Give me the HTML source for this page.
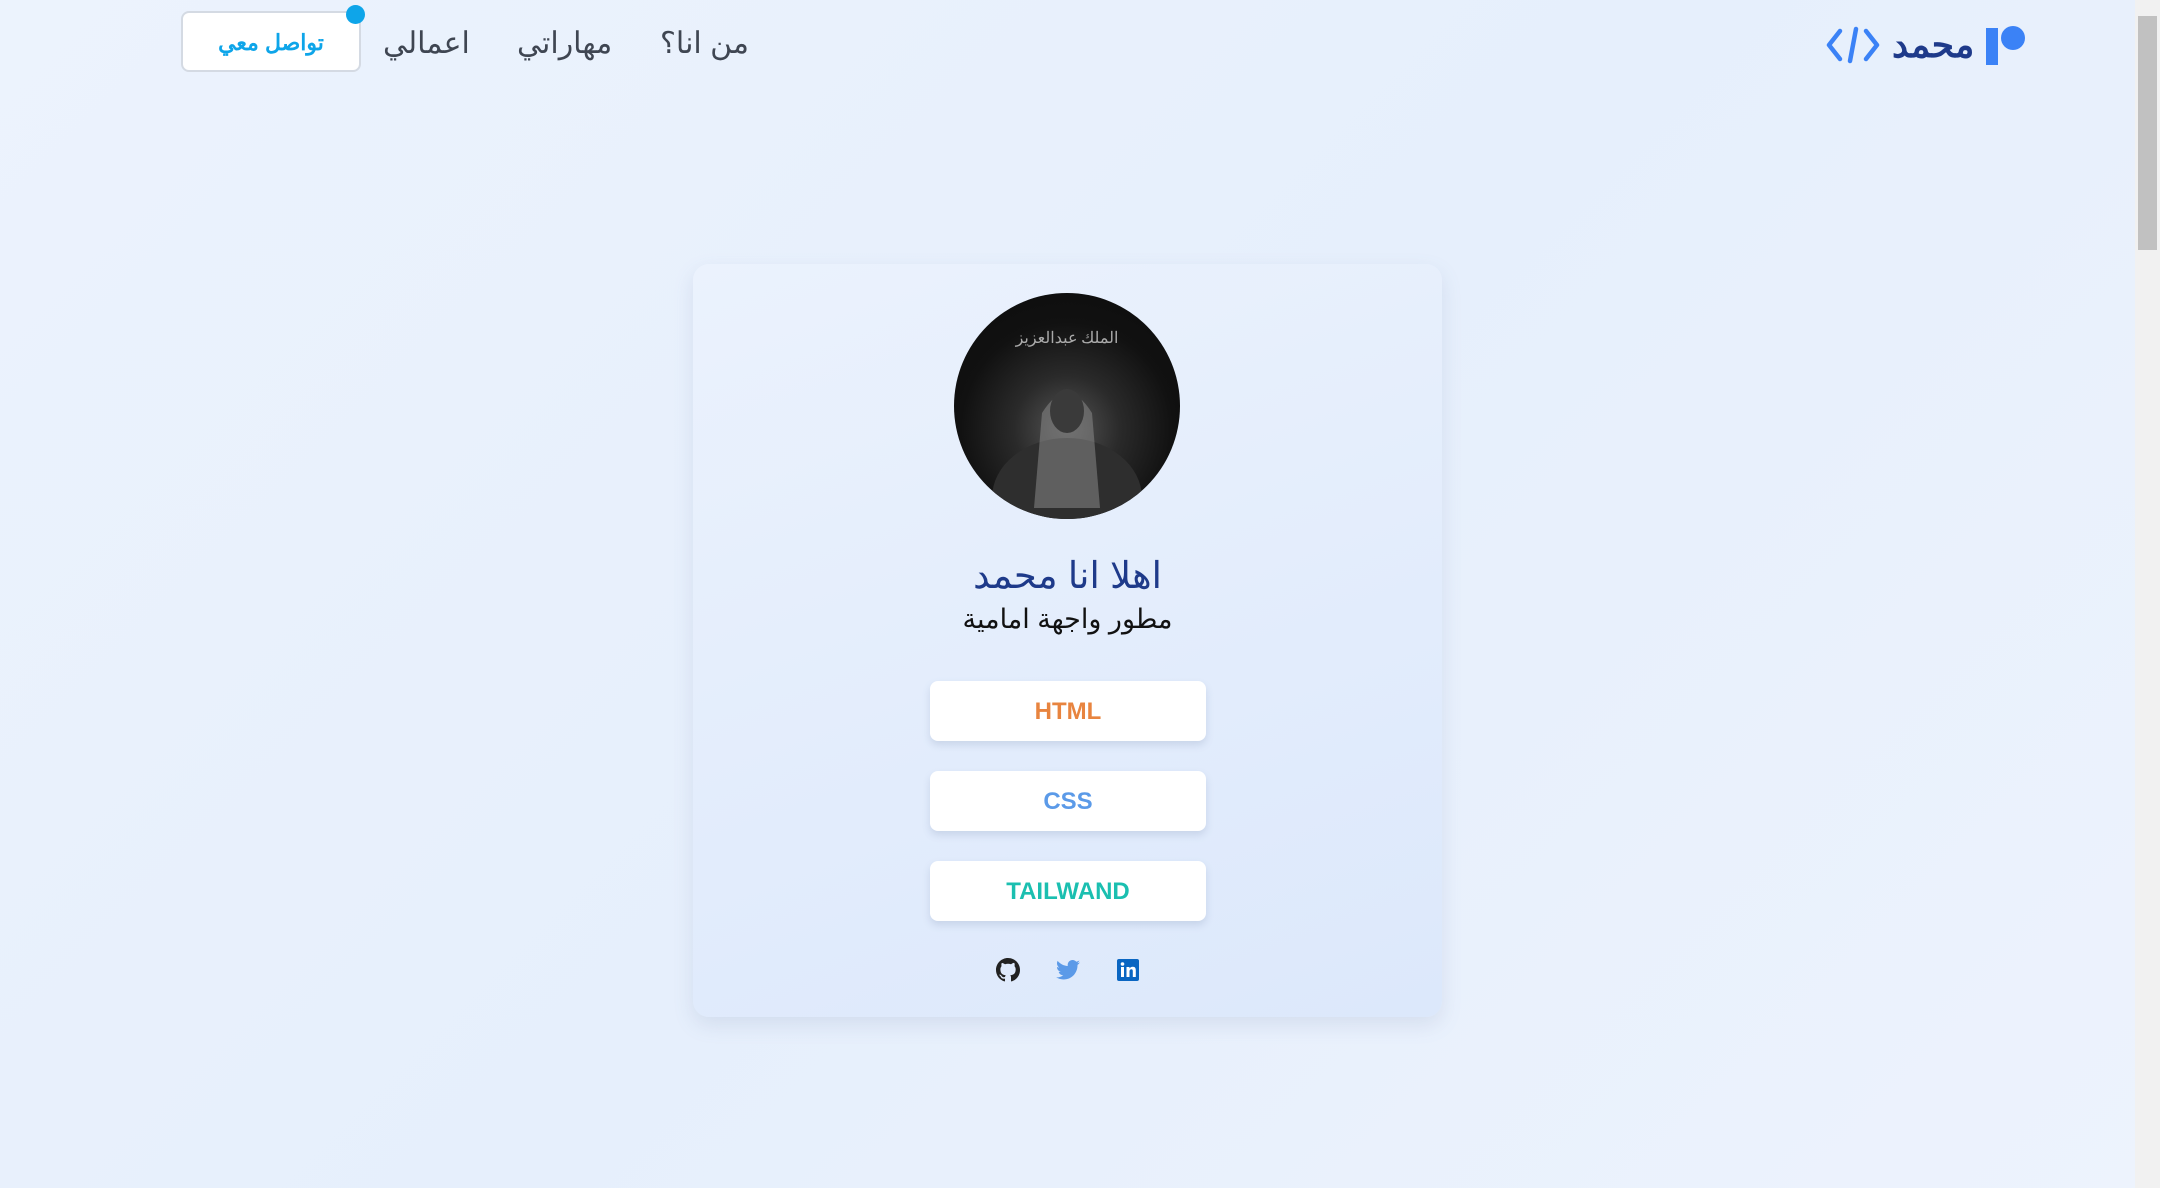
<!DOCTYPE html>
<html><head><meta charset="utf-8"><style>
*{margin:0;padding:0;box-sizing:border-box}
body{width:2160px;height:1188px;overflow:hidden;background:linear-gradient(135deg,#ecf3fd 0%,#e6effc 50%,#edf3fd 100%);font-family:"Liberation Sans","Noto Sans CJK SC",sans-serif;position:relative}
.sb{position:absolute;right:0;top:0;width:25px;height:1188px;background:#f1f1f1}
.sb div{position:absolute;left:3px;right:3px;top:16px;height:234px;background:#c1c1c1}
.nav{position:absolute;top:26px;font-size:30px;color:#3f4652;direction:rtl}
.btn{position:absolute;left:181px;top:11px;width:180px;height:61px;background:#fff;border:2px solid #d4dae3;border-radius:8px;color:#0ea5e9;font-size:22px;text-align:center;line-height:59px;direction:rtl;font-weight:bold}
.dot{position:absolute;left:346px;top:5px;width:19px;height:19px;border-radius:50%;background:#0ea5e9}
.logo{position:absolute;left:1826px;top:20px;height:50px;display:flex;align-items:center;gap:12px}
.card{position:absolute;left:693px;top:264px;width:749px;height:753px;border-radius:16px;background:linear-gradient(160deg,#ebf2fd,#dce8fb);box-shadow:0 8px 20px rgba(100,120,160,.15)}
.av{position:absolute;left:954px;top:293px;width:226px;height:226px;border-radius:50%;background:radial-gradient(circle at 50% 60%,#555 0,#2a2a2a 30%,#111 60%,#0b0b0b 100%);overflow:hidden}
.t1{position:absolute;left:693px;width:749px;text-align:center;top:554px;font-size:37px;color:#1e3a8a;direction:rtl}
.t2{position:absolute;left:693px;width:749px;text-align:center;top:604px;font-size:27px;color:#111;direction:rtl}
.sk{position:absolute;left:930px;width:276px;height:60px;background:#fff;border-radius:8px;box-shadow:0 4px 8px rgba(100,120,160,.2);text-align:center;line-height:62px;font-size:24px;font-weight:bold}
</style></head><body>
<div class="logo">
<svg width="54" height="40" viewBox="0 0 54 40"><path d="M14 6 L3 20 L14 34 M40 6 L51 20 L40 34 M30 4 L24 36" fill="none" stroke="#3b82f6" stroke-width="4.5" stroke-linecap="round" stroke-linejoin="round"/></svg>
<span style="font-size:36px;font-weight:bold;color:#1e3a8a;direction:rtl">محمد</span>
<svg width="40" height="40" viewBox="0 0 40 40"><rect x="0" y="3" width="12" height="37" fill="#3b82f6"/><circle cx="27" cy="13" r="12" fill="#3b82f6"/></svg>
</div>
<div class="nav" style="left:660px">من انا؟</div>
<div class="nav" style="left:517px">مهاراتي</div>
<div class="nav" style="left:383px">اعمالي</div>
<div class="btn">تواصل معي</div><div class="dot"></div>
<div class="card"></div>
<div class="av"><svg width="226" height="226"><text x="113" y="50" fill="#aaa" font-size="16" text-anchor="middle" font-family="Noto Sans CJK SC,sans-serif">الملك عبدالعزيز</text><ellipse cx="113" cy="205" rx="75" ry="60" fill="#2e2e2e"/><path d="M88 120 Q113 80 138 120 L146 215 L80 215Z" fill="#888" opacity=".55"/><ellipse cx="113" cy="118" rx="17" ry="22" fill="#3a3a3a"/></svg></div>
<div class="t1">اهلا انا محمد</div>
<div class="t2">مطور واجهة امامية</div>
<div class="sk" style="top:681px;color:#e8843f">HTML</div>
<div class="sk" style="top:771px;color:#5b9ae8">CSS</div>
<div class="sk" style="top:861px;color:#1bbfb0">TAILWAND</div>
<svg style="position:absolute;left:996px;top:958px" width="24" height="24" viewBox="0 0 16 16"><path fill="#222" d="M8 0C3.58 0 0 3.58 0 8c0 3.54 2.29 6.530 5.47 7.59.4.07.55-.17.55-.38 0-.19-.01-.82-.01-1.49-2.01.37-2.530-.49-2.69-.94-.09-.23-.48-.94-.82-1.13-.28-.15-.68-.52-.01-.53.63-.01 1.08.58 1.23.82.72 1.21 1.87.87 2.33.66.07-.52.28-.87.51-1.07-1.78-.2-3.64-.89-3.64-3.95 0-.87.31-1.590.82-2.150-.08-.2-.36-1.020.08-2.12 0 0 .67-.21 2.2.82.64-.18 1.32-.27 2-.27.68 0 1.36.09 2 .27 1.53-1.04 2.2-.82 2.2-.82.44 1.1.16 1.92.08 2.12.51.56.82 1.27.82 2.15 0 3.07-1.87 3.75-3.65 3.95.29.25.54.73.54 1.48 0 1.07-.01 1.93-.01 2.2 0 .21.15.46.55.38A8.013 8.013 0 0016 8c0-4.42-3.58-8-8-8z"/></svg>
<svg style="position:absolute;left:1056px;top:959px" width="24" height="22" viewBox="0 0 24 20"><path fill="#5b9ae8" d="M24 2.4c-.9.4-1.8.6-2.8.8 1-.6 1.8-1.6 2.2-2.7-1 .6-2 1-3.1 1.2C19.3.7 18 0 16.6 0c-2.7 0-4.9 2.2-4.9 4.9 0 .4 0 .8.1 1.1C7.7 5.8 4.1 3.9 1.7.9c-.4.7-.7 1.6-.7 2.5 0 1.7.9 3.2 2.2 4.1-.8 0-1.6-.2-2.2-.6v.1c0 2.4 1.7 4.4 3.9 4.8-.4.1-.8.2-1.3.2-.3 0-.6 0-.9-.1.6 2 2.4 3.4 4.6 3.4-1.7 1.3-3.8 2.1-6.1 2.1-.4 0-.8 0-1.2-.1 2.2 1.4 4.8 2.2 7.5 2.2 9.1 0 14-7.5 14-14v-.6c1-.7 1.800-1.6 2.5-2.5z"/></svg>
<svg style="position:absolute;left:1117px;top:959px" width="22" height="22" viewBox="0 0 22 22"><rect width="22" height="22" rx="2" fill="#0a66c2"/><rect x="4" y="8" width="3" height="10" fill="#fff"/><circle cx="5.5" cy="5" r="1.8" fill="#fff"/><path d="M9.5 8h3v1.5c.6-1 1.7-1.8 3.3-1.8 2.5 0 3 1.6 3 3.8V18h-3v-5.6c0-1.2-.2-2.1-1.4-2.1s-1.9.9-1.9 2.1V18h-3z" fill="#fff"/></svg>
<div class="sb"><div></div></div>
</body></html>
